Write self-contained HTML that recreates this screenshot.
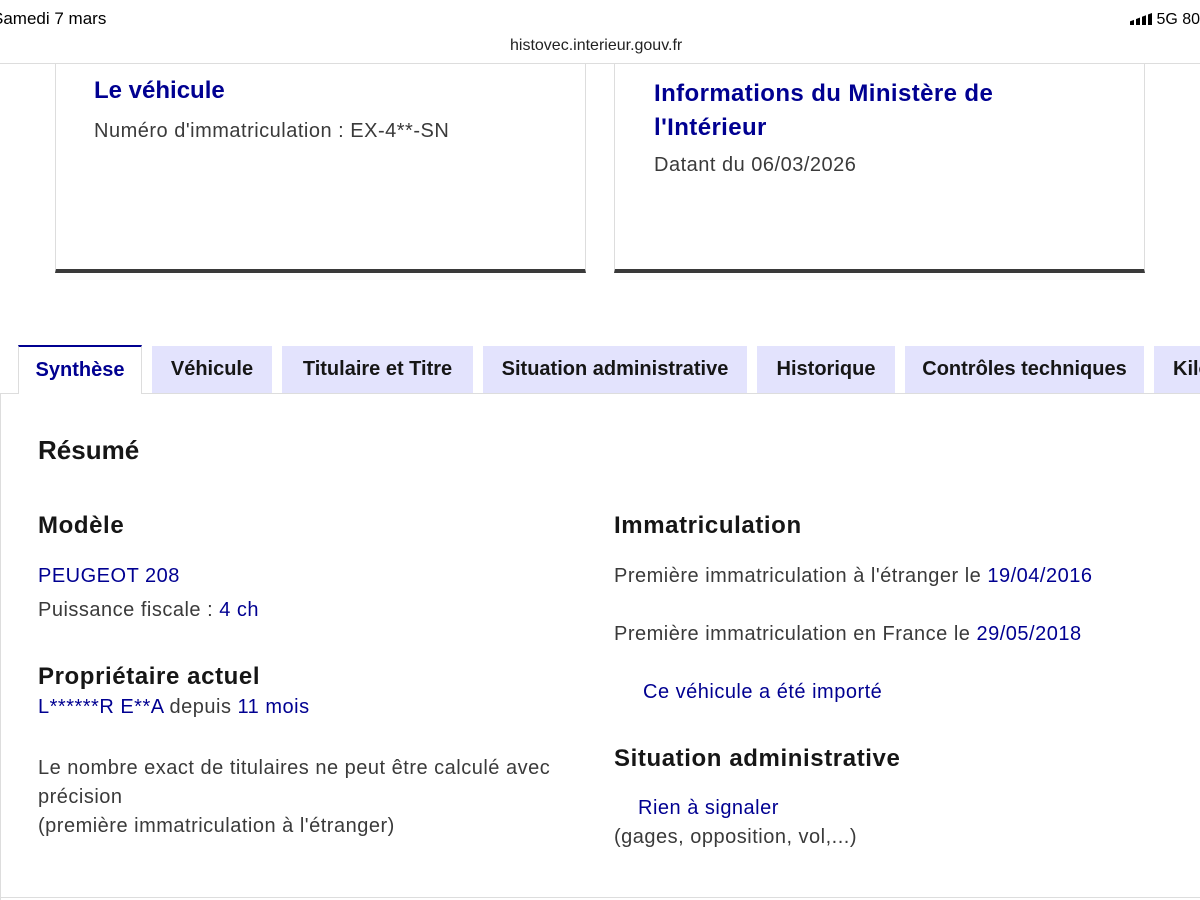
<!DOCTYPE html><html><head><meta charset="utf-8"><style>
body{margin:0;width:1200px;height:900px;overflow:hidden;background:#fff;font-family:"Liberation Sans",sans-serif;color:#3a3a3a;position:relative}
.a{position:absolute;white-space:nowrap}
.t{font-size:20px;letter-spacing:0.5px}
.b{color:#000091}
.h{font-weight:bold;color:#161616;font-size:24px;letter-spacing:0.6px}
.tab{position:absolute;top:346px;height:47px;background:#e3e3fd;font-weight:bold;color:#161616;font-size:20px;line-height:47px;text-align:center}
</style></head><body>
<div class="a" style="left:-8px;top:9px;font-size:17px;color:#000">Samedi 7 mars</div>
<div class="a" style="left:1130px;top:11px;width:70px;overflow:hidden;font-size:16px;color:#000"><span style="display:inline-block;width:22px;height:12px;vertical-align:-1px;background:linear-gradient(90deg,#000 0 4px,transparent 4px 6px,#000 6px 10px,transparent 10px 12px,#000 12px 16px,transparent 16px 18px,#000 18px 22px);clip-path:polygon(0 70%,22px 0,22px 100%,0 100%)"></span> 5G 80</div>
<div class="a" style="left:510px;top:37px;font-size:16px;color:#222">histovec.interieur.gouv.fr</div>
<div class="a" style="left:0;top:63px;width:1200px;height:1px;background:#ddd"></div>
<div class="a" style="left:55px;top:63px;width:529px;height:206px;border:1px solid #ddd;border-top:none;border-bottom:4px solid #3a3a3a"></div>
<div class="a" style="left:614px;top:63px;width:529px;height:206px;border:1px solid #ddd;border-top:none;border-bottom:4px solid #3a3a3a"></div>
<div class="a b" style="left:94px;top:77px;font-size:24px;font-weight:bold">Le véhicule</div>
<div class="a t" style="left:94px;top:120px">Numéro d'immatriculation : EX-4**-SN</div>
<div class="a b" style="left:654px;top:77px;font-size:24px;font-weight:bold;line-height:34px;letter-spacing:0.4px">Informations du Ministère de<br>l'Intérieur</div>
<div class="a t" style="left:654px;top:154px">Datant du 06/03/2026</div>
<div class="a" style="left:0;top:393px;width:1200px;height:1px;background:#ddd"></div>
<div class="a" style="left:0;top:393px;width:1px;height:507px;background:#ddd"></div>
<div class="a" style="left:0;top:897px;width:1200px;height:1px;background:#ddd"></div>
<div class="tab" style="left:18px;width:124px;height:49px;background:#fff;color:#000091;border:1px solid #ddd;border-top:2px solid #000091;border-bottom:none;top:345px;box-sizing:border-box">Synthèse</div>
<div class="tab" style="left:152px;width:120px">Véhicule</div>
<div class="tab" style="left:282px;width:191px">Titulaire et Titre</div>
<div class="tab" style="left:483px;width:264px">Situation administrative</div>
<div class="tab" style="left:757px;width:138px">Historique</div>
<div class="tab" style="left:905px;width:239px">Contrôles techniques</div>
<div class="tab" style="left:1154px;width:46px;text-align:left;padding-left:19px;box-sizing:border-box;overflow:hidden">Kilométrage</div>
<div class="a h" style="left:38px;top:435px;font-size:26px;letter-spacing:0">Résumé</div>
<div class="a h" style="left:38px;top:512px">Modèle</div>
<div class="a b t" style="left:38px;top:565px">PEUGEOT 208</div>
<div class="a t" style="left:38px;top:599px">Puissance fiscale : <span class="b">4 ch</span></div>
<div class="a h" style="left:38px;top:663px">Propriétaire actuel</div>
<div class="a t" style="left:38px;top:696px"><span class="b">L******R E**A</span> depuis <span class="b">11 mois</span></div>
<div class="a t" style="left:38px;top:754px;line-height:29px">Le nombre exact de titulaires ne peut être calculé avec<br>précision<br>(première immatriculation à l'étranger)</div>
<div class="a h" style="left:614px;top:512px">Immatriculation</div>
<div class="a t" style="left:614px;top:565px">Première immatriculation à l'étranger le <span class="b">19/04/2016</span></div>
<div class="a t" style="left:614px;top:623px">Première immatriculation en France le <span class="b">29/05/2018</span></div>
<div class="a b t" style="left:643px;top:681px">Ce véhicule a été importé</div>
<div class="a h" style="left:614px;top:745px">Situation administrative</div>
<div class="a b t" style="left:638px;top:797px">Rien à signaler</div>
<div class="a t" style="left:614px;top:826px">(gages, opposition, vol,...)</div>
</body></html>
